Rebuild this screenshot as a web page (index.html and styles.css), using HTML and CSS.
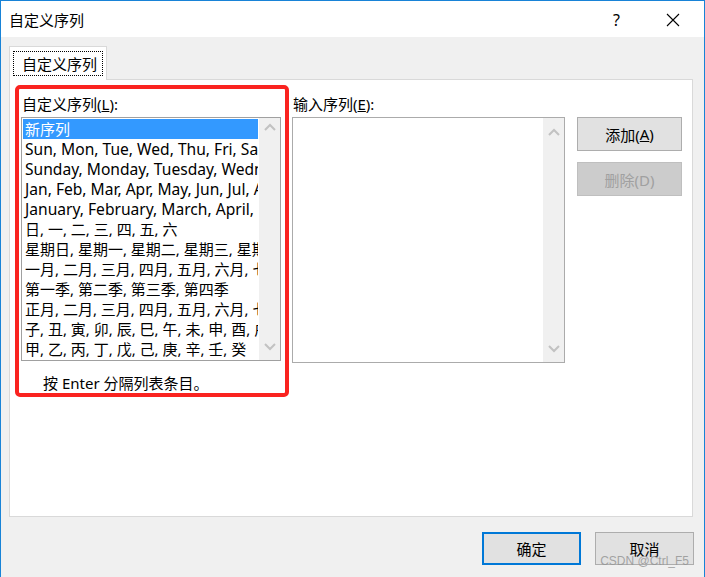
FILE: index.html
```html
<!DOCTYPE html>
<html>
<head>
  <title>自定义序列</title>
  <meta charset="utf-8" />
  <link rel="stylesheet" href="styles.css">
</head>
<body>
  <div class="window">
    <div class="titlebar">
      <span class="title">自定义序列</span>
      <span class="help">?</span>
      <svg class="close" width="14" height="14" viewBox="0 0 14 14"><path d="M1 1L13 13M13 1L1 13" stroke="#000" stroke-width="1.1" fill="none"/></svg>
    </div>

    <div class="body">
      <div class="tabs">
        <div class="tab"><span class="tab-focus">自定义序列</span></div>
      </div>

      <div class="panel">
        <div class="col-list">
          <div class="label">自定义序列(<u>L</u>):</div>
          <div class="listbox">
            <div class="rows">
              <div class="row selected">新序列</div>
              <div class="row en">Sun, Mon, Tue, Wed, Thu, Fri, Sat</div>
              <div class="row en">Sunday, Monday, Tuesday, Wednesday, Thursday, Friday, Saturday</div>
              <div class="row en">Jan, Feb, Mar, Apr, May, Jun, Jul, Aug, Sep, Oct, Nov, Dec</div>
              <div class="row en">January, February, March, April, May, June, July, August</div>
              <div class="row">日, 一, 二, 三, 四, 五, 六</div>
              <div class="row">星期日, 星期一, 星期二, 星期三, 星期四, 星期五, 星期六</div>
              <div class="row">一月, 二月, 三月, 四月, 五月, 六月, 七月, 八月</div>
              <div class="row">第一季, 第二季, 第三季, 第四季</div>
              <div class="row">正月, 二月, 三月, 四月, 五月, 六月, 七月, 八月</div>
              <div class="row">子, 丑, 寅, 卯, 辰, 巳, 午, 未, 申, 酉, 戌, 亥</div>
              <div class="row">甲, 乙, 丙, 丁, 戊, 己, 庚, 辛, 壬, 癸</div>
            </div>
            <div class="scrollbar">
              <svg class="arrow" width="12" height="8" viewBox="0 0 12 8"><path d="M1 7L6 2L11 7" stroke="#c2c2c2" stroke-width="2" fill="none"/></svg>
              <svg class="arrow" width="12" height="8" viewBox="0 0 12 8"><path d="M1 1L6 6L11 1" stroke="#c2c2c2" stroke-width="2" fill="none"/></svg>
            </div>
          </div>
          <div class="hint">按 Enter 分隔列表条目。</div>
        </div>

        <div class="col-input">
          <div class="label">输入序列(<u>E</u>):</div>
          <div class="inputbox">
            <div class="rows"></div>
            <div class="scrollbar">
              <svg class="arrow" width="12" height="8" viewBox="0 0 12 8"><path d="M1 7L6 2L11 7" stroke="#c2c2c2" stroke-width="2" fill="none"/></svg>
              <svg class="arrow" width="12" height="8" viewBox="0 0 12 8"><path d="M1 1L6 6L11 1" stroke="#c2c2c2" stroke-width="2" fill="none"/></svg>
            </div>
          </div>
        </div>

        <div class="col-buttons">
          <div class="btn">添加(<u>A</u>)</div>
          <div class="btn disabled">删除(D)</div>
        </div>
      </div>

      <div class="footer">
        <div class="btn footer-btn default">确定</div>
        <div class="btn footer-btn">取消</div>
      </div>
    </div>

    <div class="annotation"></div>
    <div class="watermark">CSDN @Ctrl_F5</div>
  </div>
</body>
</html>
```

FILE: styles.css
```css
html, body {
  margin: 0;
  padding: 0;
}
body {
  font-family: "Noto Sans", "Noto Sans CJK SC", sans-serif;
  font-size: 15px;
  color: #000;
  background: #f0f0f0;
}
.window {
  position: relative;
  width: 705px;
  height: 577px;
  box-sizing: border-box;
  border-top: 1px solid #1883d7;
  border-left: 1px solid #1883d7;
  border-right: 1px solid #1883d7;
  background: #f0f0f0;
  overflow: hidden;
}
.titlebar {
  height: 36px;
  background: #fff;
  display: flex;
  align-items: center;
  padding-left: 8px;
}
.title {
  flex: 1;
  line-height: 18px;
  margin-top: 2px;
}
.help {
  margin-right: 46px;
  margin-top: 2px;
  font-size: 16px;
}
.close {
  margin-right: 24px;
  margin-top: 2px;
}
.body {
  padding: 9px 0 0 8px;
}
.tabs {
  display: flex;
  height: 34px;
  margin-bottom: -1px;
}
.tab {
  position: relative;
  z-index: 1;
  width: 98px;
  box-sizing: border-box;
  border: 1px solid #d9d9d9;
  border-bottom: none;
  background: #fff;
  padding: 4px 3px 3px 3px;
}
.tab-focus {
  display: block;
  height: 25px;
  box-sizing: border-box;
  border: 1px dotted #000;
  line-height: 24px;
  padding-left: 8px;
}
.panel {
  width: 684px;
  height: 438px;
  box-sizing: border-box;
  border: 1px solid #d9d9d9;
  background: #fff;
  display: flex;
  padding: 15px 0 0 11px;
}
.label {
  line-height: 18px;
  padding-left: 1px;
  margin-bottom: 4px;
}
.col-list {
  width: 260px;
}
.listbox, .inputbox {
  display: flex;
  box-sizing: border-box;
  border: 1px solid #a0a0a0;
  background: #fff;
}
.listbox {
  width: 260px;
  height: 244px;
}
.inputbox {
  width: 273px;
  height: 246px;
  border-color: #ababab;
}
.rows {
  flex: 1;
  padding: 1px 1px 1px 1px;
  overflow: hidden;
}
.row {
  height: 20px;
  line-height: 20px;
  padding-left: 2px;
  white-space: nowrap;
  overflow: hidden;
}
.row.en {
  font-size: 15.6px;
}
.row.selected {
  background: #3399ff;
  color: #fff;
}
.scrollbar {
  width: 21px;
  background: #f0f0f0;
  display: flex;
  flex-direction: column;
  justify-content: space-between;
  align-items: center;
  padding: 5px 0 9px 0;
}
.inputbox .scrollbar {
  padding: 10px 0 9px 0;
}
.hint {
  margin-top: 13px;
  padding-left: 22px;
  line-height: 18px;
}
.col-input {
  margin-left: 11px;
}
.col-buttons {
  margin-left: 12px;
  padding-top: 22px;
  display: flex;
  flex-direction: column;
  gap: 11px;
}
.btn {
  width: 105px;
  height: 34px;
  box-sizing: border-box;
  border: 1px solid #adadad;
  background: #e1e1e1;
  display: flex;
  align-items: center;
  justify-content: center;
}
.btn.disabled {
  background: #cccccc;
  border-color: #bfbfbf;
  color: #a0a0a0;
}
.footer {
  display: flex;
  justify-content: flex-end;
  gap: 14px;
  padding: 15px 10px 0 0;
}
.footer-btn {
  width: 99px;
  height: 33px;
}
.footer-btn.default {
  border: 2px solid #0078d7;
}
.annotation {
  position: absolute;
  left: 14px;
  top: 84px;
  width: 274px;
  height: 312px;
  box-sizing: border-box;
  border: 4px solid #fa2320;
  border-radius: 5px;
}
.watermark {
  position: absolute;
  right: 15px;
  bottom: 9px;
  font-family: "Liberation Sans", sans-serif;
  font-size: 12px;
  color: rgba(150, 150, 150, 0.85);
}
```
